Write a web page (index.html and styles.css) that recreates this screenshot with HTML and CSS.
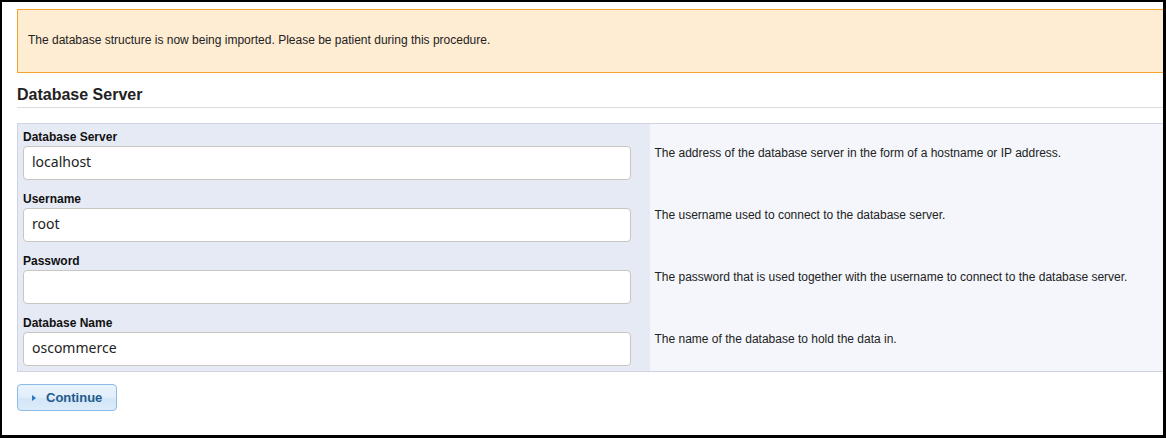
FILE: index.html
```html
<!DOCTYPE html>
<html>
<head>
<meta charset="utf-8">
<link rel="stylesheet" href="styles.css">
</head>
<body>
<div class="frame">
  <div class="page">
    <div class="notice">The database structure is now being imported. Please be patient during this procedure.</div>
    <h2 class="section-title">Database Server</h2>
    <table class="form-table">
      <tr>
        <td class="field">
          <label class="label">Database Server</label>
          <input class="input" type="text" value="localhost">
        </td>
        <td class="desc">The address of the database server in the form of a hostname or IP address.</td>
      </tr>
      <tr>
        <td class="field">
          <label class="label">Username</label>
          <input class="input" type="text" value="root">
        </td>
        <td class="desc">The username used to connect to the database server.</td>
      </tr>
      <tr>
        <td class="field">
          <label class="label">Password</label>
          <input class="input" type="password" value="">
        </td>
        <td class="desc">The password that is used together with the username to connect to the database server.</td>
      </tr>
      <tr>
        <td class="field">
          <label class="label">Database Name</label>
          <input class="input" type="text" value="oscommerce">
        </td>
        <td class="desc">The name of the database to hold the data in.</td>
      </tr>
    </table>
    <button class="btn" type="button"><span class="btn-arrow"></span>Continue</button>
  </div>
</div>
</body>
</html>
```

FILE: styles.css
```css
html, body {
  margin: 0;
  padding: 0;
  background: #fff;
}
.frame {
  width: 1166px;
  height: 438px;
  box-sizing: border-box;
  border-style: solid;
  border-color: #000;
  border-width: 2px 3px 3px 2px;
  overflow: hidden;
  background: #fff;
}
.page {
  width: 1170px;
  padding: 7px 0 0 15px;
  font-family: "Liberation Sans", Arial, sans-serif;
  font-size: 12px;
  color: #222;
}
.notice {
  background: #feecd3;
  border: 1px solid #f5a52d;
  padding: 23px 10px 25px 10px;
  line-height: 14px;
  color: #222;
}
.section-title {
  margin: 12px 0 0 0;
  font-size: 16px;
  line-height: 20px;
  font-weight: bold;
  color: #222;
  padding-bottom: 2px;
  border-bottom: 1px solid #dcdcdc;
}
.form-table {
  margin-top: 15px;
  width: 100%;
  border-collapse: collapse;
  border: 1px solid #cdd3e3;
}
.form-table td {
  padding: 0;
  height: 62px;
  box-sizing: border-box;
}
.field {
  width: 632px;
  background: #e6eaf5;
  padding: 6px 0 4px 5px !important;
  vertical-align: top;
}
.label {
  display: block;
  font-weight: bold;
  font-size: 12px;
  line-height: 14px;
  margin-bottom: 2px;
  color: #111;
}
.input {
  display: block;
  width: 608px;
  height: 34px;
  box-sizing: border-box;
  margin: 0;
  border: 1px solid #c9c6c0;
  border-radius: 4px;
  background: #fff;
  padding: 0 8px 3px 8px;
  font-family: "Noto Sans", "Open Sans", sans-serif;
  font-size: 14px;
  color: #222;
  outline: none;
}
.desc {
  background: #f4f6fb;
  padding: 0 5px 3px 5px !important;
  vertical-align: middle;
  font-size: 12px;
  line-height: 14px;
  color: #222;
}
.btn {
  margin-top: 12px;
  display: flex;
  align-items: center;
  width: 100px;
  height: 27px;
  box-sizing: border-box;
  border: 1px solid #8cbbe9;
  border-radius: 4px;
  background: linear-gradient(#eaf3fc 0%, #e0edf9 50%, #d3e6f7 55%, #dcebf9 100%);
  padding: 0 0 0 14px;
  font-family: "Liberation Sans", Arial, sans-serif;
  font-size: 13px;
  font-weight: bold;
  color: #245a8d;
  cursor: pointer;
}
.btn-arrow {
  display: inline-block;
  width: 0;
  height: 0;
  border-top: 3.5px solid transparent;
  border-bottom: 3.5px solid transparent;
  border-left: 4px solid #2a78c4;
  margin-right: 10px;
}
```
